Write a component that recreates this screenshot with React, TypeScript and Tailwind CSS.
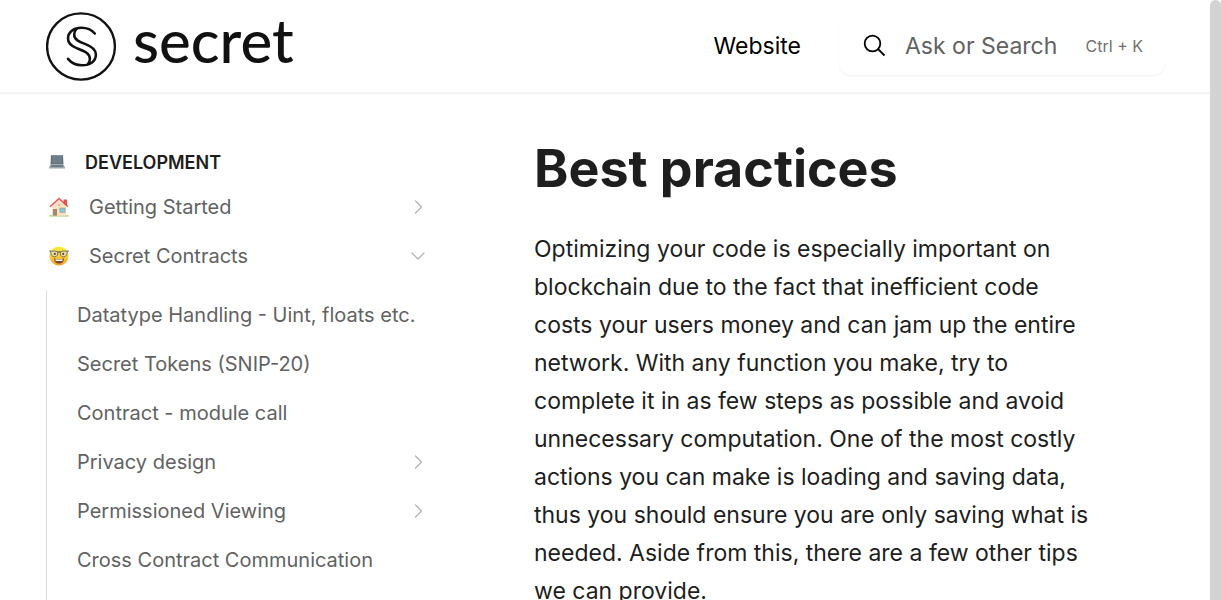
import type { ReactNode } from "react";

function LogoMark() {
  return (
    <svg viewBox="0 0 72 72" className="size-[71px]" fill="none" stroke="#111" strokeLinecap="round" aria-hidden="true">
      <ellipse cx="35.500" cy="36" rx="34.4" ry="33.6" strokeWidth="2.4" />
      <path strokeWidth="2.6" d="M49.500 22.800C46 18.800 41.500 17 36 17C28 17 22.300 21.500 22.300 28C22.300 33 25.500 35.500 31 37.600C38 40.300 44.500 42.500 44.500 48.500C44.500 51 43.800 52.500 42.800 53.500" />
      <path strokeWidth="2.6" d="M22.300 48.500C26 53 31 55 36.500 55C45 55 50.600 51 50.600 44.200C50.600 38.500 46 35.800 40 33.600C33.500 31.200 28.600 29 28.600 24C28.600 21.500 29.500 19.600 30.800 18.400" />
    </svg>
  );
}

function Laptop() {
  return (
    <svg viewBox="0 0 20 20" className="size-4" aria-hidden="true">
      <path d="M2.500 1.500h15l.6 11.500H1.900z" fill="#5b6a74" />
      <path d="M3.500 2.500h13l.4 9.500H3.100z" fill="#6f7f89" />
      <path d="M1.900 13h16.200L20 17v1H0v-1z" fill="#9aa7ae" />
      <path d="M3 14h14l.8 1.800H2.200z" fill="#5f6c75" />
    </svg>
  );
}

function House() {
  return (
    <svg viewBox="0 0 20 20" className="size-5" aria-hidden="true">
      <path d="M.5 18.200h19v1.300H.5z" fill="#9ccc65" />
      <path d="M14.500 2.500H18v6h-3.500z" fill="#e0504c" />
      <path d="M3 9l7-6.500L17 9v9.700H3z" fill="#f9e2c6" />
      <path d="M1 9.800L10 1.500l9 8.300" fill="none" stroke="#ef5350" strokeWidth="1.500" />
      <path d="M4 12h4v6.700H4z" fill="#a48672" />
      <path d="M10.500 10.700h6v5h-6z" fill="#b39c88" />
      <path d="M11.300 11.500h4.400V15h-4.400z" fill="#6fd0e6" />
      <path d="M8.700 7h2.600v2H8.700z" fill="#dcc29b" />
    </svg>
  );
}

function Nerd() {
  return (
    <svg viewBox="0 0 20 20" className="size-5" aria-hidden="true">
      <defs>
        <linearGradient id="face" x1="0" y1="0" x2="0" y2="1">
          <stop offset="0" stopColor="#fdee38" />
          <stop offset="0.6" stopColor="#fbc72e" />
          <stop offset="1" stopColor="#f39a2c" />
        </linearGradient>
      </defs>
      <circle cx="10" cy="10" r="9.500" fill="url(#face)" />
      <path d="M5 12.500q5 1.300 10 0c0 3.300-2 5-5 5s-5-1.700-5-5z" fill="#7a4a32" />
      <path d="M6.500 13.200q3.500.6 7 0v1.900h-7z" fill="#fff" />
      <g fill="#ece0a0" stroke="#66655a" strokeWidth="0.9">
        <path d="M1.700 5.300q3.400-.9 6.800.4c.7 2.900-.5 5.200-2.900 5.200s-3.900-2-3.900-5.600z" />
        <path d="M18.300 5.300q-3.400-.9-6.800.4c-.7 2.900.5 5.200 2.900 5.200s3.900-2 3.900-5.600z" />
      </g>
      <path d="M.3 5h1.500M18.200 5h1.500M8.500 6.300q1.500-.8 3 0" fill="none" stroke="#55554d" strokeWidth="1.100" />
      <circle cx="5.800" cy="7.900" r="1.100" fill="#5f4736" />
      <circle cx="14.200" cy="7.900" r="1.100" fill="#5f4736" />
    </svg>
  );
}

function Chevron({ open = false }: { open?: boolean }) {
  return (
    <svg viewBox="0 0 16 16" className="size-4 shrink-0" fill="none" stroke="#b4b4b4" strokeWidth="1.3" strokeLinecap="round" aria-hidden="true">
      <path d={open ? "M2 5l6 6 6-6" : "M5.500 2l6 6-6 6"} />
    </svg>
  );
}

function NavItem({ label, icon, branch, open }: { label: string; icon?: ReactNode; branch?: boolean; open?: boolean }) {
  return (
    <li className="flex h-[49px] items-center justify-between pr-4">
      <a href="#" className="flex items-center gap-5">
        {icon}
        {label}
      </a>
      {branch && (
        <button type="button" aria-label={`Toggle ${label}`}>
          <Chevron open={open} />
        </button>
      )}
    </li>
  );
}

const contracts = [
  { label: "Datatype Handling - Uint, floats etc." },
  { label: "Secret Tokens (SNIP-20)" },
  { label: "Contract - module call" },
  { label: "Privacy design", branch: true },
  { label: "Permissioned Viewing", branch: true },
  { label: "Cross Contract Communication" },
];

export default function App() {
  return (
    <div className="flex h-screen overflow-hidden bg-white font-['Inter',sans-serif] text-[#1e1e1e]">
      <div className="flex min-w-0 flex-1 flex-col">
        <header className="flex h-[94px] shrink-0 items-center justify-between border-b-2 border-[#f4f4f4] pr-[45px] pl-[46px]">
          <a href="#" className="flex items-center gap-4 text-[#111]">
            <LogoMark />
            <span className="pb-3 font-['Lato',sans-serif] text-[60px] leading-[64px] font-medium">secret</span>
          </a>
          <div className="flex items-center gap-[38px]">
            <a href="#" className="text-[23px] text-black">Website</a>
            <button type="button" className="flex h-[58px] w-[326px] items-center rounded-xl pr-[22px] pl-6 shadow-[0_1px_2px_rgba(0,0,0,0.06)]">
              <svg viewBox="0 0 24 24" className="size-6" fill="none" stroke="#000" strokeWidth="1.8" aria-hidden="true">
                <circle cx="9.500" cy="9.500" r="7.800" />
                <path d="M15 15l6.500 6.500" />
              </svg>
              <span className="ml-[18px] flex-1 text-left text-[23px] text-[#626262]">Ask or Search</span>
              <kbd className="font-['Inter',sans-serif] text-[16px] text-[#707070]">Ctrl + K</kbd>
            </button>
          </div>
        </header>
        <div className="flex min-h-0 flex-1">
          <nav aria-label="Documentation" className="flex w-[442px] shrink-0 flex-col pt-14 pl-[46px] text-[20px] text-[#626262]">
            <h2 className="mb-2 flex h-6 items-center gap-5 pl-[3px] text-[18px] font-semibold text-[#1e1e1e]">
              <Laptop />
              DEVELOPMENT
            </h2>
            <ul className="pl-[3px]">
              <NavItem label="Getting Started" icon={<House />} branch />
              <NavItem label="Secret Contracts" icon={<Nerd />} branch open />
            </ul>
            <ul className="mt-[10px] flex-1 border-l border-[#dedede] pl-[30px]">
              {contracts.map((item) => (
                <NavItem key={item.label} {...item} />
              ))}
            </ul>
          </nav>
          <main className="min-w-0 flex-1 pt-[45px] pr-[116px] pl-[92px]">
            <h1 className="text-[52px] leading-[60px] font-bold">Best practices</h1>
            <p className="mt-[31px] text-[23px] leading-[38px]">
              Optimizing your code is especially important on blockchain due to the fact that inefficient code costs
              your users money and can jam up the entire network. With any function you make, try to complete it in as
              few steps as possible and avoid unnecessary computation. One of the most costly actions you can make is
              loading and saving data, thus you should ensure you are only saving what is needed. Aside from this, there
              are a few other tips we can provide.
            </p>
          </main>
        </div>
      </div>
      <div className="w-[11px] shrink-0 rounded-t-md bg-[#d3d3d3]" aria-hidden="true" />
    </div>
  );
}
